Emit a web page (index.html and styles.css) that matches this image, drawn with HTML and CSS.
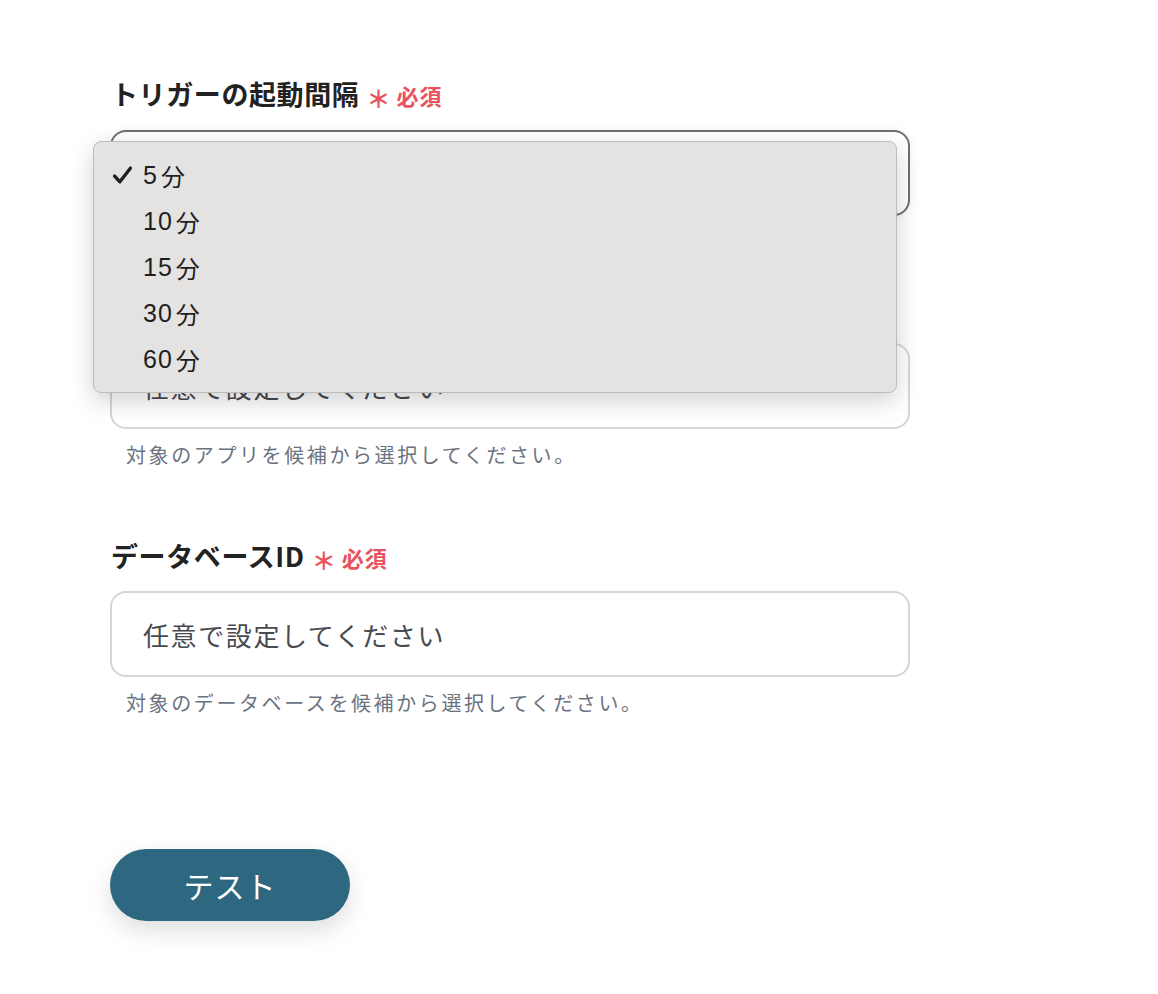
FILE: index.html
```html
<!DOCTYPE html>
<html lang="ja">
<head>
<meta charset="utf-8">
<link rel="stylesheet" href="styles.css">
</head>
<body>
<main class="form">
  <section class="field field-first">
    <div class="label"><span class="label-text">トリガーの起動間隔</span><span class="req"><span class="ast">＊</span>必須</span></div>
    <div class="select-wrap">
      <div class="select focused"></div>
      <ul class="menu">
        <li class="opt"><span class="check"><svg viewBox="0 0 20 20" width="21" height="21"><path d="M2.5 10.5 L7.5 16 L17.5 3" fill="none" stroke="#1f1f1f" stroke-width="3.2" stroke-linecap="round" stroke-linejoin="round"/></svg></span><span class="num">5</span>分</li>
        <li class="opt"><span class="check"></span><span class="num">10</span>分</li>
        <li class="opt"><span class="check"></span><span class="num">15</span>分</li>
        <li class="opt"><span class="check"></span><span class="num">30</span>分</li>
        <li class="opt"><span class="check"></span><span class="num">60</span>分</li>
      </ul>
    </div>
  </section>
  <section class="field field-second">
    <div class="input">任意で設定してください</div>
    <p class="help">対象のアプリを候補から選択してください。</p>
  </section>
  <section class="field field-third">
    <div class="label"><span class="label-text">データベースID</span><span class="req"><span class="ast">＊</span>必須</span></div>
    <div class="input">任意で設定してください</div>
    <p class="help">対象のデータベースを候補から選択してください。</p>
  </section>
  <div class="actions">
    <button class="btn">テスト</button>
  </div>
</main>
</body>
</html>
```

FILE: styles.css
```css
* { box-sizing: border-box; }
html, body { margin: 0; padding: 0; background: #ffffff; }
body {
  font-family: "Noto Sans CJK JP", "Noto Sans", sans-serif;
  color: #222;
}
.form {
  width: 800px;
  margin-left: 110px;
  padding-top: 74px;
  padding-bottom: 60px;
  display: flex;
  flex-direction: column;
}
.field { display: flex; flex-direction: column; }
.field-second { margin-top: 127px; }
.field-third { margin-top: 68px; }
.label {
  display: flex;
  align-items: baseline;
  height: 40px;
  margin-bottom: 16px;
  padding-left: 1px;
}
.field-third .label { margin-bottom: 15px; }
.label-text {
  font-size: 27px;
  font-weight: 700;
  letter-spacing: 0.6px;
  color: #222;
}
.req {
  color: #e8535d;
  font-size: 22px;
  font-weight: 700;
  margin-left: 7px;
  letter-spacing: 1px;
}
.ast { display: inline-block; margin-right: 5px; font-size: 24px; transform: translateY(3px); }
.select-wrap { position: relative; }
.select {
  height: 86px;
  border: 2px solid #d4d6da;
  border-radius: 16px;
  background: #fff;
}
.select.focused { border-color: #6f6f6f; box-shadow: 0 0 10px rgba(0,0,0,0.06); }
.menu {
  position: absolute;
  left: -17px;
  top: 11px;
  width: 804px;
  margin: 0;
  padding: 10px 0 10px;
  list-style: none;
  background: #e4e3e2;
  border: 1px solid #bdbcbb;
  border-radius: 8px;
  box-shadow: 0 8px 24px rgba(0,0,0,0.18);
  z-index: 5;
}
.opt {
  display: flex;
  align-items: center;
  height: 46px;
  font-size: 24px;
  color: #1f1f1f;
  padding-left: 18px;
}
.check {
  display: inline-flex;
  align-items: center;
  width: 31px;
}
.num { font-family: "Liberation Sans", "Noto Sans", sans-serif; font-size: 25px; margin-right: 3px; letter-spacing: 1px; }
.input {
  height: 86px;
  border: 2px solid #d4d6da;
  border-radius: 16px;
  background: #fff;
  display: flex;
  align-items: center;
  padding-left: 31px;
  font-size: 26px;
  letter-spacing: 1.6px;
  color: #474b51;
}
.help {
  margin: 13px 0 0 16px;
  font-size: 20px;
  letter-spacing: 2.6px;
  color: #6b7280;
  line-height: 26px;
}
.actions { margin-top: 133px; }
.btn {
  width: 240px;
  height: 72px;
  border: none;
  border-radius: 36px;
  background: #2e6880;
  color: #fff;
  font-family: "Noto Sans CJK JP", sans-serif;
  font-size: 30px;
  letter-spacing: 1px;
  box-shadow: 0 10px 24px rgba(0,0,0,0.13);
  cursor: pointer;
}
```
